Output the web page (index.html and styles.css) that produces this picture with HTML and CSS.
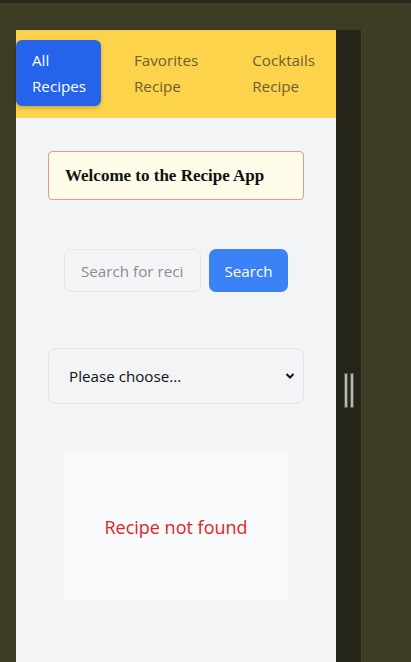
FILE: index.html
```html
<!DOCTYPE html>
<html>
<head>
<meta charset="utf-8">
<link rel="stylesheet" href="styles.css">
</head>
<body>
<div class="topbar"></div>
<div class="desk">
  <div class="app">
    <nav class="nav">
      <a class="link active">All<br>Recipes</a>
      <a class="link">Favorites<br>Recipe</a>
      <a class="link last">Cocktails<br>Recipe</a>
    </nav>
    <main class="main">
      <div class="welcome">Welcome to the Recipe App</div>
      <div class="search">
        <input class="search-input" type="text" placeholder="Search for recipes">
        <button class="search-btn">Search</button>
      </div>
      <div class="select">
        <span>Please choose...</span>
        <svg class="chev" width="10" height="8" viewBox="0 0 10 8"><path d="M1.5 2 L5 5.5 L8.5 2" fill="none" stroke="#111" stroke-width="2"/></svg>
      </div>
      <div class="result">Recipe not found</div>
    </main>
  </div>
  <div class="gutter">
    <div class="handle"><span></span><span></span></div>
  </div>
  <div class="edge"></div>
</div>
</body>
</html>
```
FILE: styles.css
```css
html, body { margin: 0; padding: 0; }
body {
  background: #3d3c24;
  width: 411px;
  height: 662px;
  overflow: hidden;
  font-family: "Open Sans", "Noto Sans", sans-serif;
}
.topbar { height: 3px; background: #2a291b; }
.desk {
  display: flex;
  padding: 27px 0 0 16px;
  height: 632px;
}
.app {
  width: 320px;
  background: #f3f4f6;
  display: flex;
  flex-direction: column;
}
.nav {
  background: #fdd34c;
  height: 88px;
  box-sizing: border-box;
  padding-top: 10px;
  display: flex;
  align-items: flex-start;
  gap: 17px;
}
.link {
  display: block;
  padding: 7px 16px;
  font-size: 15.2px;
  line-height: 26px;
  color: #6b5f30;
  border-radius: 6px;
}
.link.last { margin-left: 5px; }
.link.active {
  background: #2563eb;
  color: #fff;
  width: 53px;
  box-shadow: 0 2px 4px rgba(0,0,0,0.2);
}
.main {
  display: flex;
  flex-direction: column;
  align-items: center;
  padding-top: 33px;
}
.welcome {
  width: 256px;
  height: 49px;
  box-sizing: border-box;
  border: 1px solid #f19292;
  border-radius: 4px;
  background: #fefce8;
  padding-left: 16px;
  display: flex;
  align-items: center;
  font-family: "Liberation Serif", "DejaVu Serif", serif;
  font-weight: bold;
  font-size: 17px;
  color: #111;
}
.search {
  display: flex;
  gap: 8px;
  margin-top: 49px;
}
.search-input {
  width: 137px;
  height: 43px;
  box-sizing: border-box;
  border: 1px solid #e2e4e8;
  border-radius: 7px;
  background: #f3f4f6;
  padding: 0 16px;
  font-family: inherit;
  font-size: 15.2px;
  color: #333;
  outline: none;
}
.search-input::placeholder { color: #8a8d93; }
.search-btn {
  width: 79px;
  height: 43px;
  border: none;
  border-radius: 7px;
  background: #3b82f6;
  color: #fff;
  font-family: inherit;
  font-size: 15.2px;
  padding: 0;
}
.select {
  margin-top: 56px;
  width: 256px;
  height: 56px;
  box-sizing: border-box;
  border: 1px solid #dfe1e5;
  border-radius: 8px;
  background: #f3f4f6;
  display: flex;
  align-items: center;
  justify-content: space-between;
  padding: 0 8px 0 20px;
  font-size: 15.2px;
  color: #111;
}
.result {
  margin-top: 49px;
  width: 224px;
  height: 147px;
  background: #f9fafb;
  display: flex;
  align-items: center;
  justify-content: center;
  color: #dc2626;
  font-size: 18px;
}
.gutter {
  width: 25px;
  background: #25251a;
  display: flex;
  justify-content: center;
  align-items: flex-start;
}
.handle {
  margin-top: 343px;
  display: flex;
  gap: 2px;
  margin-left: 1px;
}
.handle span {
  width: 2px;
  height: 33px;
  background: #b8b8b0;
  border: 1px solid #55554a;
}
.edge { width: 1px; background: #46452c; }
```
